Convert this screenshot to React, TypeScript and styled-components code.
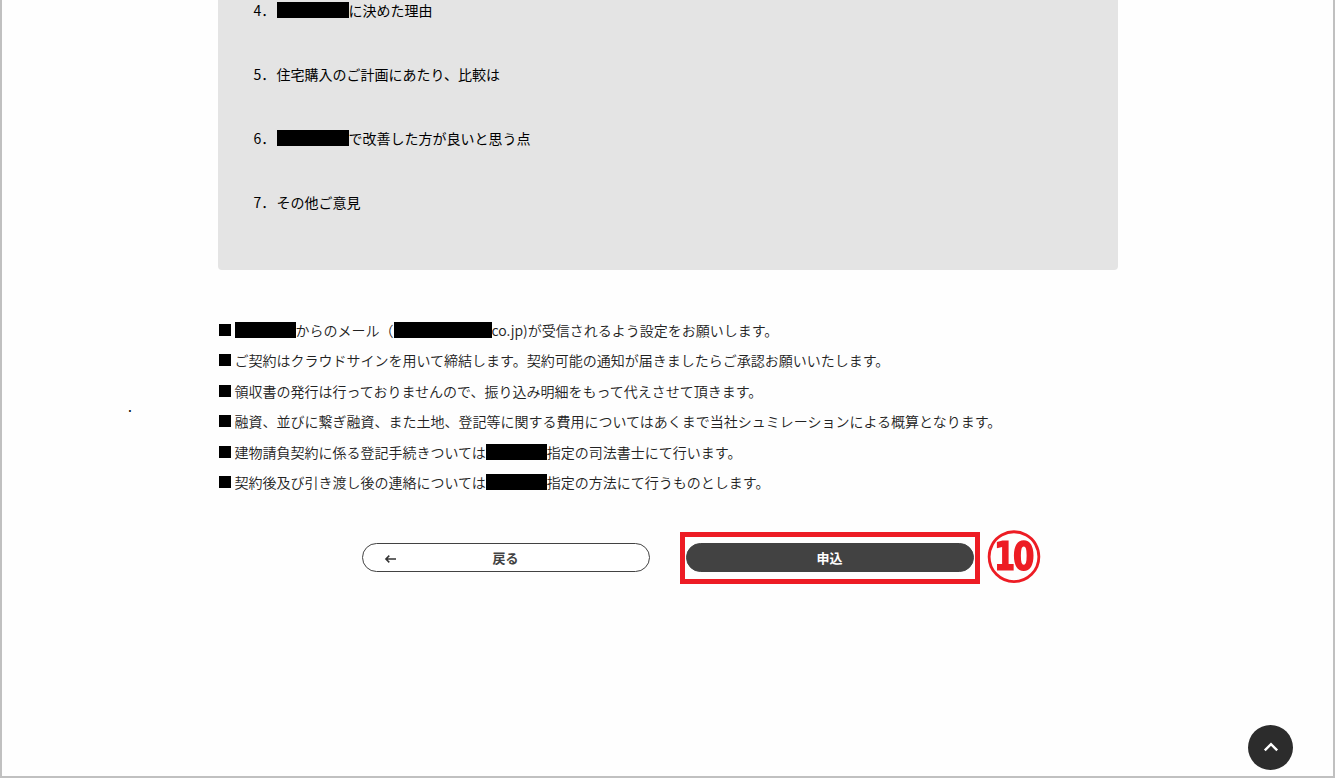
import React from "react";
import styled, { createGlobalStyle } from "styled-components";

const GlobalStyle = createGlobalStyle`
  *, *::before, *::after { box-sizing: border-box; }
  body {
    margin: 0;
    background: #fefefe;
    color: #000;
    font-family: "Noto Sans CJK JP", "Noto Sans", sans-serif;
    font-size: 14px;
  }
`;

const Page = styled.main`
  position: relative;
  min-height: 100vh;
  border: 2px solid #c0c0c0;
  border-top: 0;
`;

const Content = styled.div`
  max-width: 900px;
  margin: 0 auto;
`;

const Survey = styled.ol`
  display: flex;
  flex-direction: column;
  gap: 44px;
  margin: 0;
  padding: 0 36px 58px;
  list-style: none;
  background: #e4e4e4;
  border-radius: 0 0 4px 4px;
`;

const SurveyItem = styled.li`
  display: flex;
  align-items: center;
  line-height: 20px;
`;

const ItemNumber = styled.span`
  width: 23px;
  white-space: nowrap;
`;

const Redaction = styled.span<{ $width: number }>`
  display: inline-block;
  flex: none;
  width: ${(p) => p.$width}px;
  height: 16px;
  background: #000;
`;

const Notes = styled.ul`
  display: flex;
  flex-direction: column;
  justify-content: space-between;
  min-height: 182px;
  margin: 45px 0 0;
  padding: 0;
  list-style: none;
`;

const Note = styled.li`
  display: flex;
  align-items: center;
  line-height: 30px;
  font-weight: 350;
  color: #222;

  &::before {
    content: "";
    flex: none;
    width: 12px;
    height: 12px;
    margin: 0 4px 0 1px;
    background: #000;
  }
`;

const Actions = styled.div`
  display: flex;
  justify-content: center;
  gap: 36px;
  margin-top: 46px;
`;

const PillButton = styled.button<{ $filled?: boolean }>`
  display: grid;
  grid-template-columns: 1fr auto 1fr;
  align-items: center;
  width: 288px;
  height: 29px;
  padding: 0 21px;
  border: 1px solid #424242;
  border-radius: 15px;
  background: ${(p) => (p.$filled ? "#424242" : "#fff")};
  color: ${(p) => (p.$filled ? "#fff" : "#424242")};
  font: inherit;
  font-size: 13px;
  font-weight: 700;
  line-height: 27px;
  cursor: pointer;
`;

const ButtonLabel = styled.span`
  grid-column: 2;
`;

const SubmitArea = styled.div`
  position: relative;
`;

const Highlight = styled.div`
  position: absolute;
  inset: -11px -6px -12px;
  border: 5px solid #ed1c24;
  pointer-events: none;
`;

const StepMark = styled.span`
  position: absolute;
  left: 298px;
  top: -14px;
  font-family: "DejaVu Sans", sans-serif;
  font-size: 72px;
  line-height: 56px;
  font-weight: 700;
  color: #ed1c24;
`;

const StrayDot = styled.span`
  position: absolute;
  left: 126px;
  top: 398px;
  line-height: 16px;
`;

const PageTop = styled.a`
  position: fixed;
  right: 42px;
  bottom: 8px;
  display: flex;
  align-items: center;
  justify-content: center;
  width: 45px;
  height: 45px;
  border-radius: 50%;
  background: #2c2c2c;
`;

const BackArrow = () => (
  <svg width="14" height="12" viewBox="0 0 14 12" fill="none" stroke="#333" strokeWidth="1.5" aria-hidden="true">
    <path d="M12 7H2M5.3 3.6L1.9 7l3.4 3.4" />
  </svg>
);

const ChevronUp = () => (
  <svg width="16" height="12" viewBox="0 0 16 12" fill="none" stroke="#fff" strokeWidth="2.4" aria-hidden="true">
    <path d="M1.8 8.4L8 2.2L14.2 8.4" />
  </svg>
);

const survey: { no: number; mask?: number; text: string }[] = [
  { no: 4, mask: 72, text: "に決めた理由" },
  { no: 5, text: "住宅購入のご計画にあたり、比較は" },
  { no: 6, mask: 72, text: "で改善した方が良いと思う点" },
  { no: 7, text: "その他ご意見" },
];

// Numbers stand for blacked-out names, given as their width.
const notes: (string | number)[][] = [
  [61, "からのメール（", 98, "co.jp)が受信されるよう設定をお願いします。"],
  ["ご契約はクラウドサインを用いて締結します。契約可能の通知が届きましたらご承認お願いいたします。"],
  ["領収書の発行は行っておりませんので、振り込み明細をもって代えさせて頂きます。"],
  ["融資、並びに繋ぎ融資、また土地、登記等に関する費用についてはあくまで当社シュミレーションによる概算となります。"],
  ["建物請負契約に係る登記手続きついては", 61, "指定の司法書士にて行います。"],
  ["契約後及び引き渡し後の連絡については", 61, "指定の方法にて行うものとします。"],
];

export default function App() {
  return (
    <>
      <GlobalStyle />
      <Page lang="ja">
        <Content>
          <Survey>
            {survey.map((item) => (
              <SurveyItem key={item.no}>
                <ItemNumber>{item.no}．</ItemNumber>
                {item.mask && <Redaction $width={item.mask} />}
                <span>{item.text}</span>
              </SurveyItem>
            ))}
          </Survey>
          <Notes>
            {notes.map((parts, i) => (
              <Note key={i}>
                {parts.map((part, j) =>
                  typeof part === "number" ? <Redaction key={j} $width={part} /> : <span key={j}>{part}</span>
                )}
              </Note>
            ))}
          </Notes>
          <Actions>
            <PillButton type="button">
              <BackArrow />
              <ButtonLabel>戻る</ButtonLabel>
            </PillButton>
            <SubmitArea>
              <PillButton type="submit" $filled>
                <ButtonLabel>申込</ButtonLabel>
              </PillButton>
              <Highlight />
              <StepMark>⑩</StepMark>
            </SubmitArea>
          </Actions>
        </Content>
        <StrayDot>.</StrayDot>
        <PageTop href="#" aria-label="ページの先頭へ">
          <ChevronUp />
        </PageTop>
      </Page>
    </>
  );
}
